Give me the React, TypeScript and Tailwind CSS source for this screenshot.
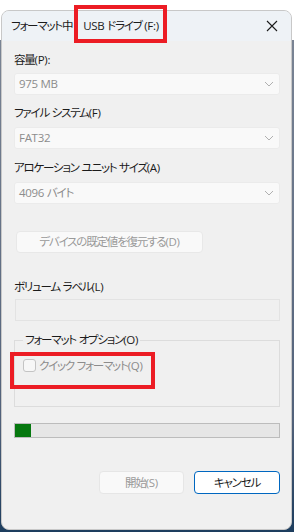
const FONT = "font-['Open_Sans','Noto_Sans_CJK_JP',sans-serif] [font-feature-settings:'palt']";

// kana in the reference are set tight, latin parts keep normal spacing
function T({ text }: { text: string }) {
  const parts = text.split(/([\x20-\x7E]+)/).filter(Boolean);
  return (
    <>
      {parts.map((p, i) =>
        /^[\x20-\x7E]+$/.test(p) ? (
          <span key={i} className="tracking-[-0.3px]">{p}</span>
        ) : (
          <span key={i} className="tracking-[-1.2px]">{p}</span>
        )
      )}
    </>
  );
}

function Chevron() {
  return (
    <svg width="10" height="6" viewBox="0 0 10 6" className="shrink-0">
      <path d="M1 1l4 4 4-4" fill="none" stroke="#b0b0b0" strokeWidth="1" />
    </svg>
  );
}

function Select({ value }: { value: string }) {
  return (
    <div className="h-[22px] flex items-center justify-between rounded-[3px] bg-[#f9f9f9] border border-[#ebebeb] pl-[4px] pr-[5px] text-[11.5px] text-[#8c8c8c]">
      <span><T text={value} /></span>
      <Chevron />
    </div>
  );
}

function Label({ text, className = "" }: { text: string; className?: string }) {
  return (
    <div className={`text-[11.5px] leading-[16px] text-[#1b1b1b] ${className}`}>
      <T text={text} />
    </div>
  );
}

export default function App() {
  return (
    <div className={`w-[294px] h-[532px] overflow-hidden relative bg-[linear-gradient(#ffffff_0,#ffffff_40px,#7a8494_40px,#51617a_420px,#1d3d5e_532px)] pt-[10px] pl-[1px] pr-[2px] ${FONT}`}>
      <div className="h-[520px] rounded-[8px] bg-[#f0f0f0] border border-[#c8c8c8] overflow-hidden flex flex-col">
        {/* title bar */}
        <div className="h-[30px] shrink-0 bg-[#eef2f6] flex items-center pl-[9px] pr-[13px] text-[11.5px] text-[#1b1b1b]">
          <span><T text="フォーマット中" /></span>
          <span className="ml-[11px]"><T text="USB ドライブ (F:)" /></span>
          <svg width="12" height="12" viewBox="0 0 12 12" className="ml-auto">
            <path d="M1 1l10 10M11 1L1 11" stroke="#1b1b1b" strokeWidth="1.1" />
          </svg>
        </div>

        <div className="pl-[12px] pr-[11px] flex flex-col">
          <Label text="容量(P):" className="mt-[11px]" />
          <div className="mt-[5px]"><Select value="975 MB" /></div>

          <Label text="ファイル システム(F)" className="mt-[10px]" />
          <div className="mt-[6px]"><Select value="FAT32" /></div>

          <Label text="アロケーション ユニット サイズ(A)" className="mt-[11px]" />
          <div className="mt-[6px]"><Select value="4096 バイト" /></div>

          <div className="mt-[27px] ml-[2px] w-[187px] h-[22px] rounded-[4px] bg-[#f9f9f9] border border-[#e8e8e8] flex items-center justify-center text-[11.5px] text-[#9a9a9a]">
            <span><T text="デバイスの既定値を復元する(D)" /></span>
          </div>

          <Label text="ボリューム ラベル(L)" className="mt-[26px]" />
          <div className="mt-[4px] ml-[1px] h-[22px] bg-[#f0f0f0] border border-[#e3e3e3]" />

          <fieldset className="mt-[12px] h-[74px] border border-[#dcdcdc] pl-[8px] pr-[8px] m-0">
            <legend className="px-[2px] text-[11.5px] leading-[14px] text-[#1b1b1b]">
              <T text="フォーマット オプション(O)" />
            </legend>
            <div className="mt-[10px] flex items-center gap-[3px] text-[11.5px] text-[#8c8c8c]">
              <span className="w-[13px] h-[13px] rounded-[3px] border border-[#c4c4c4] bg-[#f7f7f7]" />
              <span><T text="クイック フォーマット(Q)" /></span>
            </div>
          </fieldset>

          <div className="mt-[16px] h-[15px] border border-[#bcbcbc] bg-[#e6e6e6] flex">
            <div className="w-[16px] bg-[#06780f]" />
          </div>

          <div className="mt-[33px] flex justify-end gap-[10px]">
            <div className="w-[85px] h-[23px] rounded-[4px] bg-[#f9f9f9] border border-[#e6e6e6] flex items-center justify-center text-[11.5px] text-[#9a9a9a]">
              <span><T text="開始(S)" /></span>
            </div>
            <div className="w-[86px] h-[23px] rounded-[4px] bg-white border border-[#0067c0] flex items-center justify-center text-[11.5px] text-[#1b1b1b]">
              <span><T text="キャンセル" /></span>
            </div>
          </div>
        </div>
      </div>

      {/* annotation boxes */}
      <div className="absolute left-[74px] top-[5px] w-[93px] h-[38px] border-[4px] border-[#ec1c24]" />
      <div className="absolute left-[10px] top-[352px] w-[145px] h-[37px] border-[4px] border-[#ec1c24]" />
    </div>
  );
}
